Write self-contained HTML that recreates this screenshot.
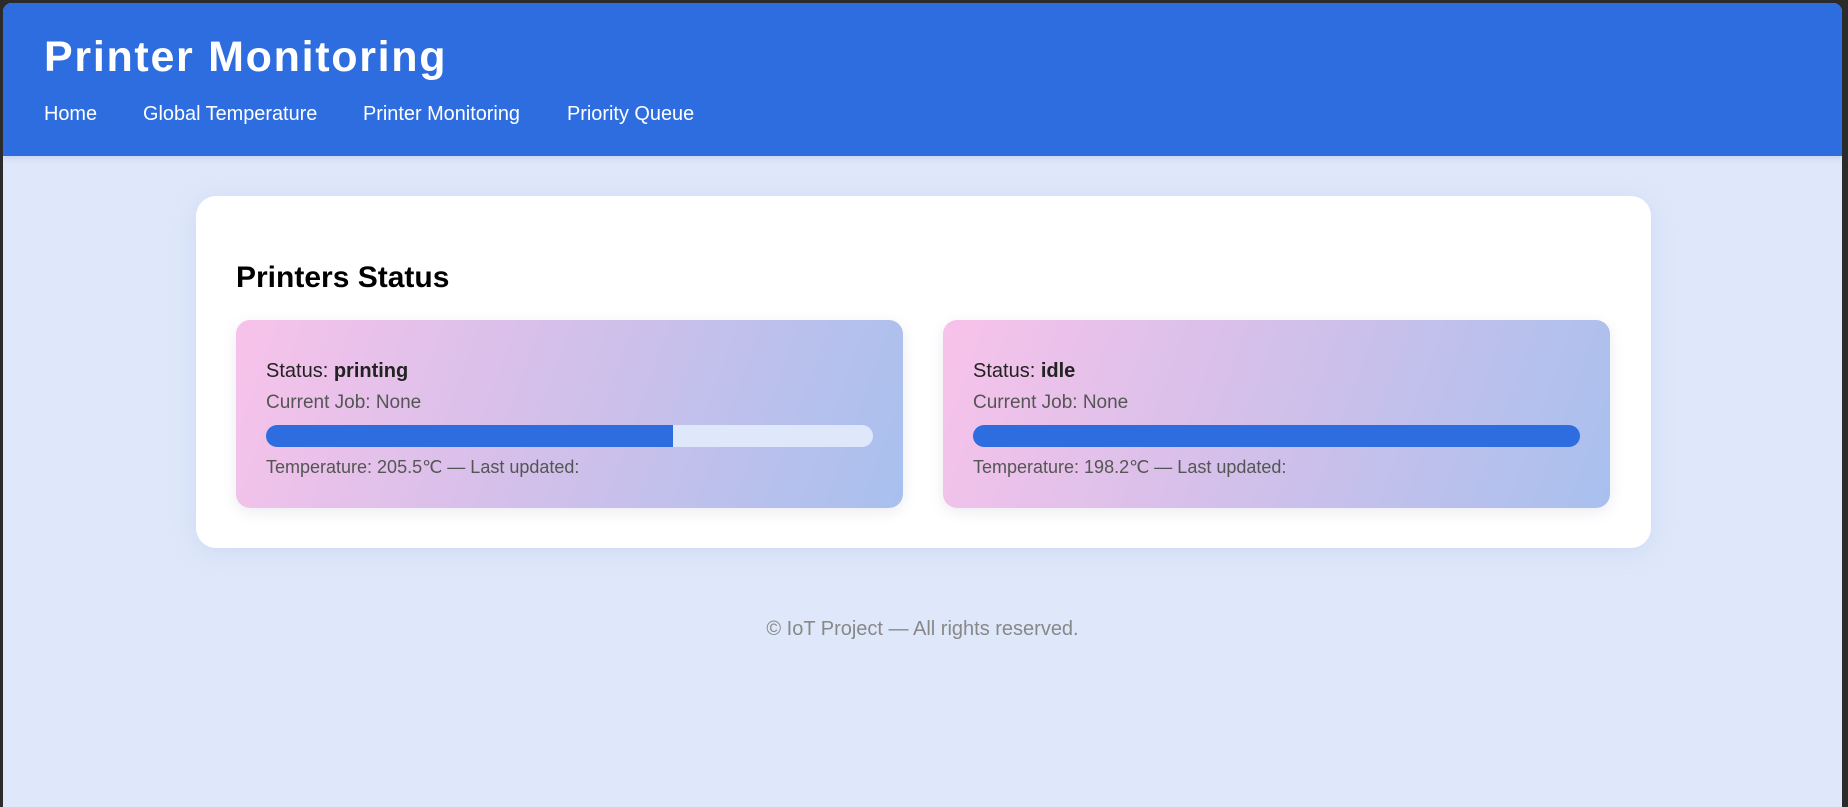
<!DOCTYPE html>
<html><head><meta charset="utf-8"><style>
*{margin:0;padding:0;box-sizing:border-box}
html,body{width:1848px;height:807px;overflow:hidden;background:#2b2b2b;font-family:"Liberation Sans",Arial,sans-serif}
.win{position:absolute;left:3px;top:3px;width:1839px;height:804px;background:#dfe8fa;border-radius:9px 9px 0 0;overflow:hidden}
.hdr{position:absolute;left:0;top:0;width:100%;height:153px;background:#2e6ddf;box-shadow:0 2px 6px rgba(40,80,160,.15)}
.hdr h1{position:absolute;left:41px;top:28px;font-size:43px;font-weight:bold;color:#fff;letter-spacing:1.7px;line-height:52px}
.nav a{position:absolute;top:99px;font-size:19.9px;color:#fff;text-decoration:none;line-height:24px}
.main{position:absolute;left:193px;top:193px;width:1455px;height:352px;background:#fff;border-radius:20px;box-shadow:0 4px 24px rgba(120,150,220,.18)}
.main h2{position:absolute;left:40px;top:65px;font-size:30px;font-weight:bold;color:#000;line-height:34px}
.card{position:absolute;top:124px;width:667px;height:188px;border-radius:14px;background:linear-gradient(110deg,#f8c2ea 0%,#d4c0ea 45%,#a8c0ee 100%);box-shadow:0 4px 14px rgba(100,100,160,.12)}
.card .s{position:absolute;left:30px;top:40px;font-size:20px;color:#222;line-height:22px}
.card .j{position:absolute;left:30px;top:72px;font-size:19px;color:#555;line-height:22px}
.bar{position:absolute;left:30px;top:105px;width:607px;height:22px;border-radius:11px;background:#dfe8fa;overflow:hidden}
.bar div{height:100%;background:#2e6ddf}
.card .t{position:absolute;left:30px;top:136px;font-size:18px;color:#555;line-height:22px}
.foot{position:absolute;left:0;width:100%;top:614px;text-align:center;font-size:20px;color:#888;line-height:24px}
</style></head><body>
<div class="win">
<div class="hdr">
<h1>Printer Monitoring</h1>
<div class="nav"><a style="left:41px">Home</a><a style="left:140px">Global Temperature</a><a style="left:360px">Printer Monitoring</a><a style="left:564px">Priority Queue</a></div>
</div>
<div class="main">
<h2>Printers Status</h2>
<div class="card" style="left:40px">
<div class="s">Status: <b>printing</b></div>
<div class="j">Current Job: None</div>
<div class="bar"><div style="width:67%"></div></div>
<div class="t">Temperature: 205.5℃ — Last updated:</div>
</div>
<div class="card" style="left:747px">
<div class="s">Status: <b>idle</b></div>
<div class="j">Current Job: None</div>
<div class="bar"><div style="width:100%"></div></div>
<div class="t">Temperature: 198.2℃ — Last updated:</div>
</div>
</div>
<div class="foot">© IoT Project — All rights reserved.</div>
</div>
</body></html>
